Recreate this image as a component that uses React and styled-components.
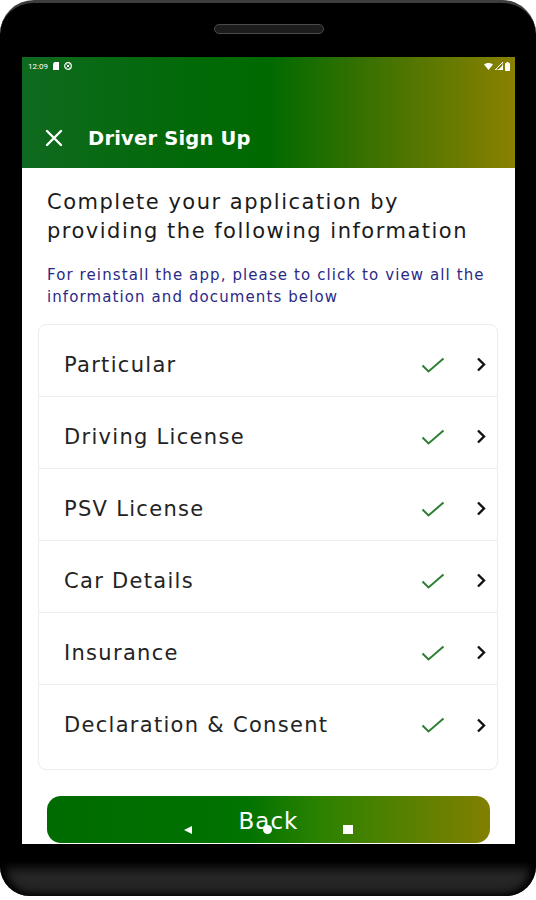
import styled, { createGlobalStyle } from "styled-components";

const GlobalStyle = createGlobalStyle`
  body {
    margin: 0;
    background: #fff;
    font-family: "DejaVu Sans", "Liberation Sans", sans-serif;
  }
`;

const Phone = styled.div`
  width: 536px;
  display: flex;
  flex-direction: column;
`;
const Frame = styled.div`
  background: #000;
  border-top: 3px solid #3d3d3d;
  border-radius: 34px 34px 0 0;
  padding: 0 21px 18px 22px;
  display: flex;
  flex-direction: column;
`;
const SpeakerArea = styled.div`
  height: 54px;
  display: flex;
  justify-content: center;
  padding-top: 21px;
  box-sizing: border-box;
`;
const Speaker = styled.div`
  width: 108px;
  height: 8px;
  border-radius: 5px;
  background: #1c1c1c;
  border: 1px solid #4a4a4a;
`;
const Chin = styled.div`
  height: 34px;
  border-radius: 0 0 30px 30px;
  background: linear-gradient(180deg, #0c0c0c 0%, #262626 45%, #222 100%);
  box-shadow: inset 6px 0 8px #000, inset -6px 0 8px #000;
`;
const Screen = styled.div`
  height: 787px;
  background: #fff;
  position: relative;
  overflow: hidden;
  display: flex;
  flex-direction: column;
`;
const Header = styled.div`
  height: 111px;
  background: linear-gradient(90deg, #0f6a1f 0%, #03690a 30%, #006a00 50%, #3f7200 72%, #8a8100 100%);
  display: flex;
  flex-direction: column;
  justify-content: space-between;
`;
const StatusBar = styled.div`
  height: 18px;
  padding: 0 5px 0 6px;
  display: flex;
  align-items: center;
  justify-content: space-between;
  color: #fff;
  font-size: 8px;
  font-family: "Roboto", sans-serif;
`;
const StatusGroup = styled.div`
  display: flex;
  align-items: center;
  gap: ${(p) => p.$gap || 5}px;
`;
const Toolbar = styled.div`
  height: 60px;
  display: flex;
  align-items: center;
  gap: 25px;
  padding-left: 23px;
`;
const ToolbarTitle = styled.h1`
  margin: 0;
  color: #fff;
  font-size: 19.5px;
  font-weight: 600;
  letter-spacing: 0.2px;
`;
const Content = styled.div`
  flex: 1;
  padding: 20px 17px 0 16px;
  display: flex;
  flex-direction: column;
`;
const Title = styled.h2`
  margin: 0 9px;
  font-size: 21px;
  line-height: 29px;
  font-weight: 400;
  color: #1b1b1b;
  letter-spacing: 1.5px;
  white-space: nowrap;
`;
const Note = styled.p`
  margin: 18px 0 16px 9px;
  font-size: 15px;
  line-height: 22px;
  color: #2a2a86;
  letter-spacing: 1.1px;
  white-space: nowrap;
`;
const Card = styled.div`
  border: 1px solid #ececec;
  border-radius: 8px;
  padding-bottom: 12px;
`;
const Row = styled.div`
  height: 72px;
  box-sizing: border-box;
  padding: 8px 11px 0 25px;
  display: flex;
  align-items: center;
  border-bottom: ${(p) => (p.$last ? "none" : "1px solid #efefef")};
`;
const Label = styled.span`
  flex: 1;
  font-size: 21px;
  color: #232323;
  letter-spacing: 1.3px;
`;
const CheckIcon = styled.svg`
  width: 24px;
  height: 16px;
  margin-right: 31px;
`;
const Chevron = styled.svg`
  width: 10px;
  height: 15px;
`;
const BackButton = styled.button`
  margin: 26px 8px 0 9px;
  height: 47px;
  border: none;
  border-radius: 14px;
  background: linear-gradient(90deg, #006b00 0%, #007300 45%, #2d8200 62%, #827f00 100%);
  color: #fff;
  font-family: inherit;
  font-size: 23px;
  font-weight: 400;
  letter-spacing: 1px;
  padding: 2px 0 0;
`;
const NavOverlay = styled.div`
  position: absolute;
  left: 0;
  right: 0;
  bottom: 10px;
  display: flex;
  justify-content: center;
  align-items: center;
  gap: 71px;
  pointer-events: none;
`;
const NavBack = styled.div`
  width: 0;
  height: 0;
  border-top: 4.5px solid transparent;
  border-bottom: 4.5px solid transparent;
  border-right: 8px solid #fff;
`;
const NavHome = styled.div`
  width: 9px;
  height: 9px;
  border-radius: 50%;
  background: #fff;
`;
const NavRecent = styled.div`
  width: 10px;
  height: 9px;
  background: #fff;
`;

const items = [
  "Particular",
  "Driving License",
  "PSV License",
  "Car Details",
  "Insurance",
  "Declaration & Consent",
];

export default function App() {
  return (
    <>
      <GlobalStyle />
      <Phone>
        <Frame>
          <SpeakerArea>
            <Speaker />
          </SpeakerArea>
          <Screen>
            <Header>
              <StatusBar>
                <StatusGroup>
                  <span>12:09</span>
                  <svg width="6" height="8" viewBox="0 0 6 8">
                    <path d="M1.5 0H6v8H0V1.5z" fill="#fff" />
                  </svg>
                  <svg width="8" height="8" viewBox="0 0 8 8">
                    <circle cx="4" cy="4" r="3.3" fill="none" stroke="#fff" strokeWidth="1.2" />
                    <path d="M2.5 2.5l3 3M5.5 2.5l-3 3" stroke="#fff" strokeWidth="1" />
                  </svg>
                </StatusGroup>
                <StatusGroup $gap={2}>
                  <svg width="9" height="7" viewBox="0 0 9 7">
                    <path d="M0 1.5C2.6-.5 6.4-.5 9 1.5L4.5 7z" fill="#fff" />
                  </svg>
                  <svg width="8" height="8" viewBox="0 0 8 8">
                    <path d="M8 0v8H0z" fill="none" stroke="#fff" strokeWidth="1" />
                    <path d="M8 3v5H3z" fill="#fff" />
                  </svg>
                  <svg width="5" height="9" viewBox="0 0 5 9">
                    <rect x="0" y="1" width="5" height="8" rx="0.8" fill="#fff" />
                    <rect x="1.5" y="0" width="2" height="1.5" fill="#fff" />
                  </svg>
                </StatusGroup>
              </StatusBar>
              <Toolbar>
                <svg width="18" height="18" viewBox="0 0 18 18">
                  <path d="M2 2l14 14M16 2L2 16" stroke="#fff" strokeWidth="2.4" strokeLinecap="round" />
                </svg>
                <ToolbarTitle>Driver Sign Up</ToolbarTitle>
              </Toolbar>
            </Header>
            <Content>
              <Title>
                Complete your application by
                <br />
                providing the following information
              </Title>
              <Note>
                For reinstall the app, please to click to view all the
                <br />
                information and documents below
              </Note>
              <Card>
                {items.map((item, i) => (
                  <Row key={item} $last={i === items.length - 1}>
                    <Label>{item}</Label>
                    <CheckIcon viewBox="0 0 24 16">
                      <path d="M1.5 8.5l6 6L22.5 1.5" fill="none" stroke="#2e7d32" strokeWidth="2" />
                    </CheckIcon>
                    <Chevron viewBox="0 0 10 15">
                      <path d="M2 1.5l6 6-6 6" fill="none" stroke="#111" strokeWidth="2.4" />
                    </Chevron>
                  </Row>
                ))}
              </Card>
              <BackButton>Back</BackButton>
            </Content>
            <NavOverlay>
              <NavBack />
              <NavHome />
              <NavRecent />
            </NavOverlay>
          </Screen>
        </Frame>
        <Chin />
      </Phone>
    </>
  );
}
